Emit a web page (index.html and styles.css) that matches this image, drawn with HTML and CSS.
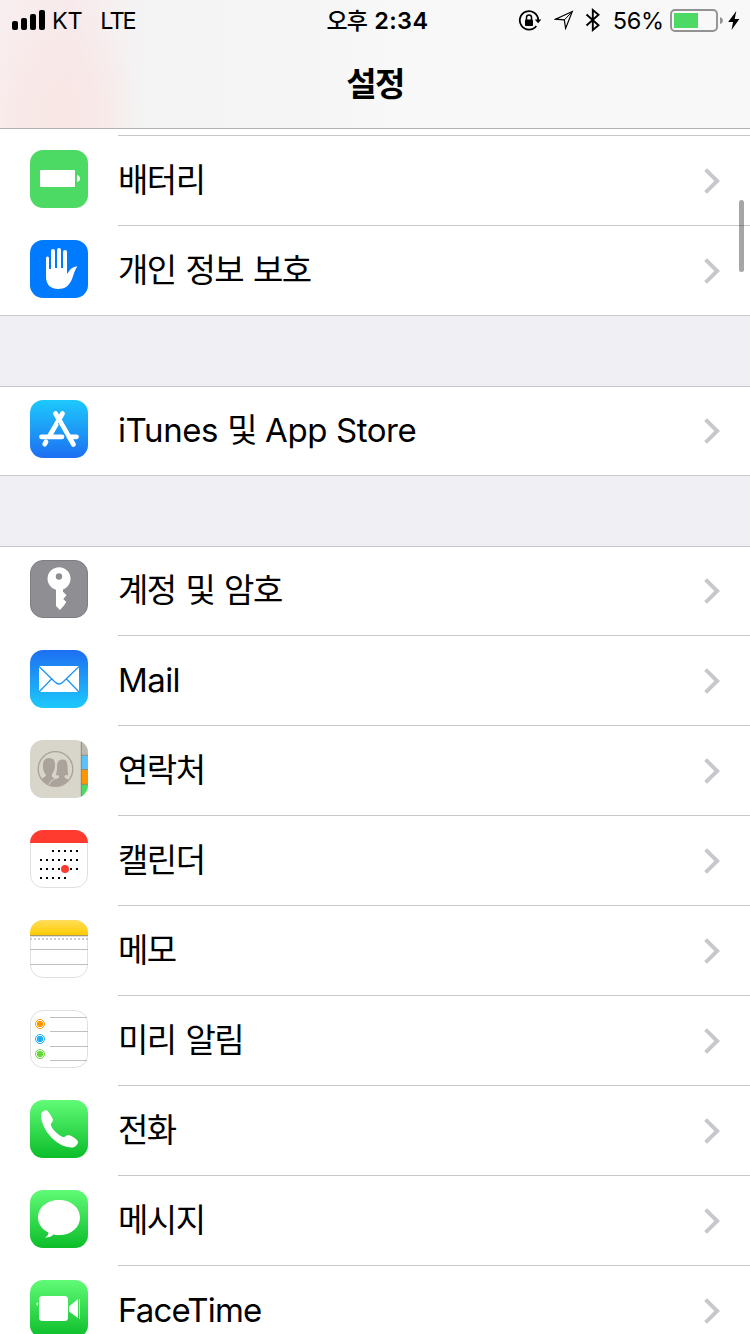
FILE: index.html
```html
<!DOCTYPE html>
<html lang="ko">
<head>
<meta charset="utf-8">
<title>설정</title>
<link rel="stylesheet" href="styles.css">
</head>
<body>
<div class="screen">
  <header class="header">
    <div class="status">
      <div class="status-left">
        <svg class="signal" width="33" height="20" viewBox="0 0 33 20"><rect x="0" y="11" width="6" height="9" rx="2"/><rect x="9" y="8" width="6" height="12" rx="2"/><rect x="18" y="4" width="6" height="16" rx="2"/><rect x="27" y="0" width="6" height="20" rx="2"/></svg>
        <span class="carrier">KT</span>
        <span class="network">LTE</span>
      </div>
      <div class="clock"><span class="clock-ko">오후</span><span class="clock-time">2:34</span></div>
      <div class="status-right">
        <svg class="lock" width="24" height="22" viewBox="0 0 24 22"><path d="M18.300 16A9.200 9.200 0 1 1 20.200 10" fill="none" stroke="#000" stroke-width="1.800"/><path d="M16.800 9.500h6.600l-3.300 3.700z"/><rect x="7" y="9.500" width="8" height="6.500" rx=".8"/><path d="M8.500 10V7.600a2.500 2.500 0 0 1 5 0V10" fill="none" stroke="#000" stroke-width="1.500"/></svg>
        <svg class="location" width="20" height="20" viewBox="0 0 20 20"><path d="M18.300 1.500L1.500 9.200l8.800.700 1.300 8.500z" fill="none" stroke="#000" stroke-width="1.200"/><path d="M18.300 1.500L10.300 9.900" stroke="#000" stroke-width="1"/></svg>
        <svg class="bluetooth" width="16" height="24" viewBox="0 0 16 24"><path d="M1.500 6.500l12 10.700L7.800 22V2l5.700 4.800L1.500 17.500" fill="none" stroke="#000" stroke-width="1.900"/></svg>
        <span class="percent">56%</span>
        <svg class="battery" width="54" height="24" viewBox="0 0 54 24"><rect x="1" y="1" width="46" height="21" rx="4" fill="none" stroke="#929292" stroke-width="1.900"/><rect x="4" y="4" width="24" height="15" fill="#4cd964"/><path d="M50 8q3 1.200 3 3.500t-3 3.500z" fill="#929292"/></svg>
        <svg class="bolt" width="12" height="19" viewBox="0 0 12 19"><path d="M8.300 0L.2 11h4.900L3.500 19l7.900-11H6.700z"/></svg>
      </div>
    </div>
    <h1 class="title">설정</h1>
  </header>

  <main class="list">
    <div class="peek"></div>
    <section class="group">
      <div class="row">
        <svg class="icon" viewBox="0 0 58 58"><rect width="58" height="58" rx="13" fill="#4cd964"/><rect x="10" y="20" width="35" height="17" rx="1" fill="#fff"/><path d="M47 25q3 1 3 3.500T47 32z" fill="#fff"/></svg>
        <div class="label ko">배터리</div>
        <svg class="chevron" viewBox="0 0 16 26"><path d="M1.600 1.600L13.200 13 1.600 24.400"/></svg>
      </div>
      <div class="row">
        <svg class="icon" viewBox="0 0 58 58"><rect width="58" height="58" rx="13" fill="#007aff"/><path d="M16 18a1.500 1.500 0 0 1 3 0V29h2V11a2 2 0 0 1 4 0V28h2V10a2 2 0 0 1 4 0V28h2V12a2 2 0 0 1 4 0V34C40 30 42 26 47.500 26.500C45 29 44 34 42 39C39 46 35 49 28 49C20 49 16 44 16 37z" fill="#fff"/></svg>
        <div class="label ko">개인 정보 보호</div>
        <svg class="chevron" viewBox="0 0 16 26"><path d="M1.600 1.600L13.200 13 1.600 24.400"/></svg>
      </div>
    </section>

    <section class="group">
      <div class="row">
        <svg class="icon" viewBox="0 0 58 58"><defs><linearGradient id="store" x2="0" y2="1"><stop stop-color="#1dc9fc"/><stop offset="1" stop-color="#1d6ff2"/></linearGradient></defs><rect width="58" height="58" rx="13" fill="url(#store)"/><g fill="none" stroke="#fff" stroke-width="4.800" stroke-linecap="round"><path d="M32.500 13.500L19.500 36M16 41.800L14.700 44.200M25.500 13.500L43.500 44.500"/><path d="M11.500 36.800H32M41 36.800H46.500"/></g><path d="M31.500 21L39.500 35" stroke="#1b9ff8" stroke-width=".8" transform="translate(-3.400 2)"/></svg>
        <div class="label"><span class="en-store">iTunes</span><span class="ko mid">및</span><span class="en-store">App Store</span></div>
        <svg class="chevron" viewBox="0 0 16 26"><path d="M1.600 1.600L13.200 13 1.600 24.400"/></svg>
      </div>
    </section>

    <section class="group">
      <div class="row">
        <svg class="icon" viewBox="0 0 58 58"><rect x=".5" y=".5" width="57" height="57" rx="12.500" fill="#8e8e93" stroke="#7e7e82"/><path fill-rule="evenodd" d="M26 29.800A11.500 11.500 0 1 1 33 29.500V31.800L36.500 35.300L33.300 39L36.300 42L34 45.500L30 50L26 46zM29 13.300a3.200 3.200 0 1 0 0 6.400 3.200 3.200 0 0 0 0-6.400z" fill="#fff"/></svg>
        <div class="label ko">계정 및 암호</div>
        <svg class="chevron" viewBox="0 0 16 26"><path d="M1.600 1.600L13.200 13 1.600 24.400"/></svg>
      </div>
      <div class="row">
        <svg class="icon" viewBox="0 0 58 58"><defs><linearGradient id="mail" x2="0" y2="1"><stop stop-color="#1d6ff2"/><stop offset="1" stop-color="#1dc9fc"/></linearGradient></defs><rect width="58" height="58" rx="13" fill="url(#mail)"/><rect x="9" y="16" width="40" height="26" fill="#fff"/><path d="M9 16.500L25 32q4 4 8 0L49 16.500M9 42L21.500 29M49 42L36.500 29" fill="none" stroke="#1e96f7" stroke-width="1.300"/></svg>
        <div class="label mail">Mail</div>
        <svg class="chevron" viewBox="0 0 16 26"><path d="M1.600 1.600L13.200 13 1.600 24.400"/></svg>
      </div>
      <div class="row">
        <svg class="icon" viewBox="0 0 58 58"><defs><clipPath id="tile"><rect width="58" height="58" rx="13"/></clipPath><clipPath id="disc"><circle cx="25.500" cy="29" r="17"/></clipPath></defs><g clip-path="url(#tile)"><rect width="58" height="58" fill="#d8d5cb"/><rect x="51" width="7" height="15" fill="#bdb9af"/><rect x="51" y="15.500" width="7" height="14" fill="#5ac2fb"/><rect x="51" y="29.500" width="7" height="15" fill="#ff9500"/><rect x="51" y="44.500" width="7" height="14" fill="#4cd964"/><path d="M51.300 0V58M51 15.300H58M51 29.500H58M51 44.300H58" stroke="#807d70" stroke-width=".8"/></g><circle cx="25.500" cy="29" r="17.300" fill="none" stroke="#aaa39b" stroke-width="1.300"/><g clip-path="url(#disc)" fill="#aaa39b"><path d="M7 40Q15.500 38 16 35Q12.500 31 13 25Q13 18 19 18Q25.500 18 25 25Q25 31 22 34V37L27 39V47H8z"/><path d="M18.500 48Q18.500 40 28.500 37.500V35.800H25Q26.500 33 26.500 26Q27 19 32.500 19Q38 19 38 26Q38 33 39 35.800H35V37.500L44 42V48z" stroke="#d8d5cb" stroke-width="1"/></g></svg>
        <div class="label ko">연락처</div>
        <svg class="chevron" viewBox="0 0 16 26"><path d="M1.600 1.600L13.200 13 1.600 24.400"/></svg>
      </div>
      <div class="row">
        <svg class="icon" viewBox="0 0 58 58"><rect x=".5" y=".5" width="57" height="57" rx="12.500" fill="#fff" stroke="#e0e0e0"/><path d="M0 13A13 13 0 0 1 13 0H45A13 13 0 0 1 58 13z" fill="#ff3b30"/><path d="M22 21H49M10 30H49M10 39H49M10 48H37" stroke="#000" stroke-width="2" stroke-dasharray="2 4"/><circle cx="35" cy="39" r="4" fill="#ff3b30"/></svg>
        <div class="label ko">캘린더</div>
        <svg class="chevron" viewBox="0 0 16 26"><path d="M1.600 1.600L13.200 13 1.600 24.400"/></svg>
      </div>
      <div class="row">
        <svg class="icon" viewBox="0 0 58 58"><defs><linearGradient id="memo" x2="0" y2="1"><stop stop-color="#ffde5c"/><stop offset="1" stop-color="#fc0"/></linearGradient></defs><rect x=".5" y=".5" width="57" height="57" rx="12.500" fill="#fff" stroke="#e0e0e0"/><path d="M0 15V13A13 13 0 0 1 13 0H45A13 13 0 0 1 58 13V15z" fill="url(#memo)"/><path d="M0 15.500H58" stroke="#a99a67"/><path d="M0 16.500H58" stroke="#dedee0"/><path d="M0 19H58" stroke="#ccc" stroke-width="2" stroke-dasharray="2"/><path d="M0 29.500H58M0 44.500H58" stroke="#bebebe"/></svg>
        <div class="label ko">메모</div>
        <svg class="chevron" viewBox="0 0 16 26"><path d="M1.600 1.600L13.200 13 1.600 24.400"/></svg>
      </div>
      <div class="row">
        <svg class="icon" viewBox="0 0 58 58"><rect x=".5" y=".5" width="57" height="57" rx="12.500" fill="#fff" stroke="#e0e0e0"/><path d="M20 7.500H57M20 21.500H58M20 36.500H58M20 50.500H57" stroke="#bebebe"/><g stroke-width="1"><g fill="#ff9500" stroke="#ff9500"><circle cx="10" cy="14" r="4.500" fill="none"/><circle cx="10" cy="14" r="2.700"/></g><g fill="#1badf8" stroke="#1badf8"><circle cx="10" cy="29" r="4.500" fill="none"/><circle cx="10" cy="29" r="2.700"/></g><g fill="#63da38" stroke="#63da38"><circle cx="10" cy="44" r="4.500" fill="none"/><circle cx="10" cy="44" r="2.700"/></g></g></svg>
        <div class="label ko">미리 알림</div>
        <svg class="chevron" viewBox="0 0 16 26"><path d="M1.600 1.600L13.200 13 1.600 24.400"/></svg>
      </div>
      <div class="row">
        <svg class="icon" viewBox="0 0 58 58"><defs><linearGradient id="green" x2="0" y2="1"><stop stop-color="#61fb77"/><stop offset="1" stop-color="#0bbd29"/></linearGradient></defs><rect width="58" height="58" rx="13" fill="url(#green)"/><path d="M11 15C11 12 14.500 10 16.500 10.200C18 10.500 23 18 23 20C23 22 20.500 23 21 25.500C22 29 29 36 33 37C35.500 37.500 36 35 38.500 35C40.500 35 47.500 39.500 48 41.500C48 44 46 47 42.500 47.500C36 48 28 44 22 38C15 31 11 22 11 15z" fill="#fff"/></svg>
        <div class="label ko">전화</div>
        <svg class="chevron" viewBox="0 0 16 26"><path d="M1.600 1.600L13.200 13 1.600 24.400"/></svg>
      </div>
      <div class="row">
        <svg class="icon" viewBox="0 0 58 58"><rect width="58" height="58" rx="13" fill="url(#green)"/><path d="M29 10C17 10 8 17.500 8 27.500C8 34 12 39.500 18.500 42.500C18.500 44.500 17 46.500 15 47.500C18.500 48 21.500 46.500 23.500 44.500C39 47.500 50 38.500 50 27.500C50 17.500 41 10 29 10z" fill="#fff"/></svg>
        <div class="label ko">메시지</div>
        <svg class="chevron" viewBox="0 0 16 26"><path d="M1.600 1.600L13.200 13 1.600 24.400"/></svg>
      </div>
      <div class="row">
        <svg class="icon" viewBox="0 0 58 58"><rect width="58" height="58" rx="13" fill="url(#green)"/><rect x="9" y="16" width="29" height="25" rx="3.500" fill="#fff"/><path d="M39 26.500L48 19V38L39 31.500zM49 19H50V39H49zM8 22V26L6 24z" fill="#fff"/></svg>
        <div class="label facetime">FaceTime</div>
        <svg class="chevron" viewBox="0 0 16 26"><path d="M1.600 1.600L13.200 13 1.600 24.400"/></svg>
      </div>
    </section>
  </main>
  <div class="scrollbar"></div>
</div>
</body>
</html>
```
FILE: styles.css
```css
* { box-sizing: border-box; }

body {
  margin: 0;
  background: #fff;
  color: #000;
  font-family: Inter, "Noto Sans CJK KR", sans-serif;
}

svg { display: block; flex: none; }

.screen {
  position: relative;
  width: 750px;
  height: 1334px;
  overflow: hidden;
}

.header {
  height: 129px;
  border-bottom: 1px solid #b2b2b2;
  background:
    radial-gradient(ellipse 80px 120px at 60px 118px, rgba(248, 230, 227, .9), rgba(248, 230, 227, .55) 50%, rgba(248, 230, 227, 0)),
    linear-gradient(90deg, #f9eeef 0, #f8eaec 70px, #f4f4f4 148px, #f5f5f5 300px, #f8f8f8 400px);
}

.status {
  display: grid;
  grid-template-columns: 1fr auto 1fr;
  height: 40px;
  padding: 0 9px 0 12px;
  font-size: 23.5px;
  line-height: 40px;
}

.status-left,
.status-right,
.clock {
  display: flex;
  align-items: center;
  height: 40px;
}

.status-right { justify-content: flex-end; }
.carrier { margin-left: 7px; letter-spacing: -.3px; padding-top: 2px; }
.network { margin-left: 18px; letter-spacing: -2px; padding-top: 2px; }
.clock { gap: 7px; padding-left: 2px; }
.clock-ko { font-family: "Noto Sans CJK KR", sans-serif; font-size: 23px; font-weight: 500; letter-spacing: -.8px; padding-bottom: 2px; }
.clock-time { font-weight: 600; letter-spacing: .4px; padding-top: 2px; }
.location { margin-left: 12px; }
.bluetooth { margin-left: 11px; }
.percent { margin-left: 12px; letter-spacing: -.2px; padding-top: 2px; }
.battery { margin-left: 6px; padding-top: 0; transform: translateY(1px); }
.bolt { margin-left: 4px; margin-right: 1px; }
.lock { margin-top: 2px; }

.title {
  margin: 0;
  padding-top: 18px;
  font: 700 33px/48px "Noto Sans CJK KR", sans-serif;
  letter-spacing: -1.5px;
  text-align: center;
}

.list { background: #efeff4; }

.peek {
  height: 7px;
  background: linear-gradient(#c8c7cc, #c8c7cc) 118px 6px / 632px 1px no-repeat #fff;
}

.group + .group { margin-top: 70px; }

.row {
  display: grid;
  grid-template-columns: 58px 1fr 16px;
  column-gap: 30px;
  height: 90px;
  padding: 14px 30px 0;
  background: linear-gradient(#c8c7cc, #c8c7cc) 118px 89px / 632px 1px no-repeat #fff;
}

.row:last-child { background: linear-gradient(#c8c7cc, #c8c7cc) 0 89px / 750px 1px no-repeat #fff; }
.group + .group .row:first-child { box-shadow: inset 0 1px #c8c7cc; }

.icon { width: 58px; height: 58px; }
.chevron { width: 16px; height: 26px; margin-top: 18px; }
.chevron path { fill: none; stroke: #c7c7cc; stroke-width: 4; }

.label {
  display: flex;
  font-size: 33px;
  line-height: 60px;
  white-space: pre;
}

.ko {
  font-family: "Noto Sans CJK KR", sans-serif;
  font-size: 33px;
  line-height: 56px;
  letter-spacing: -1.5px;
  word-spacing: 2px;
}

.mid { margin: 0 9px; }
.en-store { letter-spacing: -.4px; }
.mail { letter-spacing: -.6px; }
.facetime { letter-spacing: -.85px; }

.scrollbar {
  position: absolute;
  top: 200px;
  right: 6px;
  width: 5px;
  height: 72px;
  border-radius: 3px;
  background: rgba(0, 0, 0, .35);
}
```
